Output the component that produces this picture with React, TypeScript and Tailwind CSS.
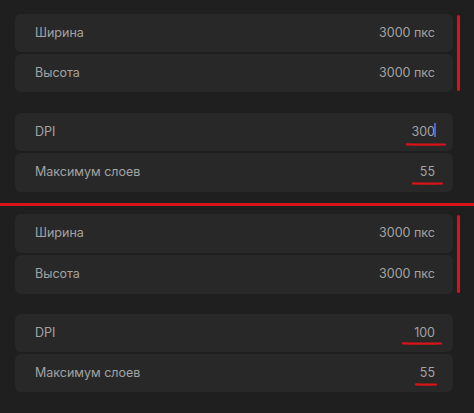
import React from "react";

type Mark = { right: number; top: number; width: number };

// Hand-drawn red underline, tapered at both ends
function Underline({ right, top, width }: Mark) {
  return (
    <svg
      className="absolute pointer-events-none"
      style={{ right, top, width, height: 5 }}
      viewBox={`0 0 ${width} 5`}
    >
      <path
        d={`M1 2.4 Q ${width / 2} 2.9 ${width - 1} 2.5`}
        stroke="#d8141a"
        strokeWidth="2.2"
        strokeLinecap="round"
        fill="none"
      />
    </svg>
  );
}

function Row({
  label,
  value,
  h,
  mark,
  cursor,
}: {
  label: string;
  value: string;
  h: string;
  mark?: Mark;
  cursor?: boolean;
}) {
  return (
    <div
      className={`relative flex items-center justify-between rounded-[6px] bg-[#282828] pl-[20px] pr-[18px] ${h}`}
    >
      <span className="text-[12.5px] text-[#a3a3a3]">{label}</span>
      <span className="relative text-[12.5px] text-[#a3a3a3]">
        {value}
        {cursor && (
          <span className="absolute right-[-1px] top-[0px] h-[14px] w-[2px] bg-[#4a63d8]" />
        )}
      </span>
      {mark && <Underline {...mark} />}
    </div>
  );
}

function VLine({ top, height }: { top: number; height: number }) {
  return (
    <div
      className="absolute right-[-7px] w-[3px] rounded-full bg-[#d8141a]"
      style={{ top, height }}
    />
  );
}

export default function App() {
  return (
    <div
      className="w-[474px] h-[413px] overflow-hidden bg-[#1f1f1f] pt-[14px]"
      style={{ fontFamily: "Inter, 'Noto Sans', sans-serif" }}
    >
      <div className="relative mx-[15px] w-[438px] flex flex-col gap-[2px]">
        <Row label="Ширина" value="3000 пкс" h="h-[38px]" />
        <Row label="Высота" value="3000 пкс" h="h-[38px]" />
        <VLine top={1} height={76} />
      </div>

      <div className="mx-[15px] mt-[21px] w-[438px] flex flex-col gap-[2px]">
        <Row
          label="DPI"
          value="300"
          h="h-[38px]"
          cursor
          mark={{ right: 7, top: 29, width: 40 }}
        />
        <Row
          label="Максимум слоев"
          value="55"
          h="h-[39px]"
          mark={{ right: 10, top: 28, width: 31 }}
        />
      </div>

      <div className="mt-[11px] h-[3px] w-full bg-[#d8141a]" />

      <div className="relative mx-[15px] mt-[8px] w-[438px] flex flex-col gap-[2px]">
        <Row label="Ширина" value="3000 пкс" h="h-[39px]" />
        <Row label="Высота" value="3000 пкс" h="h-[39px]" />
        <VLine top={1} height={78} />
      </div>

      <div className="mx-[15px] mt-[20px] w-[438px] flex flex-col gap-[2px]">
        <Row
          label="DPI"
          value="100"
          h="h-[38px]"
          mark={{ right: 11, top: 27, width: 40 }}
        />
        <Row
          label="Максимум слоев"
          value="55"
          h="h-[38px]"
          mark={{ right: 16, top: 28, width: 22 }}
        />
      </div>
    </div>
  );
}
